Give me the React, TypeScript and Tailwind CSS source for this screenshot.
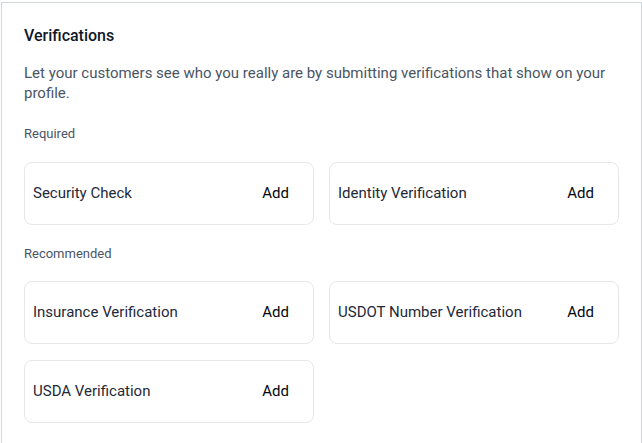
import React from "react";

const VerificationCard: React.FC<{ label: string }> = ({ label }) => {
    return (
        <div className="flex h-[63px] items-center justify-between rounded-lg border border-gray-200 bg-white pl-2 pr-6">
            <span className="text-[15px] text-gray-800">{label}</span>
            <button className="text-[15px] font-normal text-gray-950">Add</button>
        </div>
    )
}

const App: React.FC = () => {
    return (
        <div className="min-h-screen bg-white pl-px pt-[2px] font-['Roboto',sans-serif]">
            <div className="h-[460px] border-l border-r border-t border-gray-300 bg-white px-[22px] pt-[21px]">
                <h2 className="text-[16px] font-medium leading-6 text-gray-900">Verifications</h2>
                <p className="mt-[15px] text-[15px] leading-5 text-gray-600">
                    Let your customers see who you really are by submitting verifications that show on your profile.
                </p>
                <div className="mt-[21px] text-[13px] text-gray-600">Required</div>
                <div className="mt-[18px] grid grid-cols-2 gap-x-[15px] gap-y-4">
                    <VerificationCard label="Security Check" />
                    <VerificationCard label="Identity Verification" />
                </div>
                <div className="mt-[19px] text-[13px] text-gray-600">Recommended</div>
                <div className="mt-[18px] grid grid-cols-2 gap-x-[15px] gap-y-4">
                    <VerificationCard label="Insurance Verification" />
                    <VerificationCard label="USDOT Number Verification" />
                    <VerificationCard label="USDA Verification" />
                </div>
            </div>
        </div>
    )
}

export default App
